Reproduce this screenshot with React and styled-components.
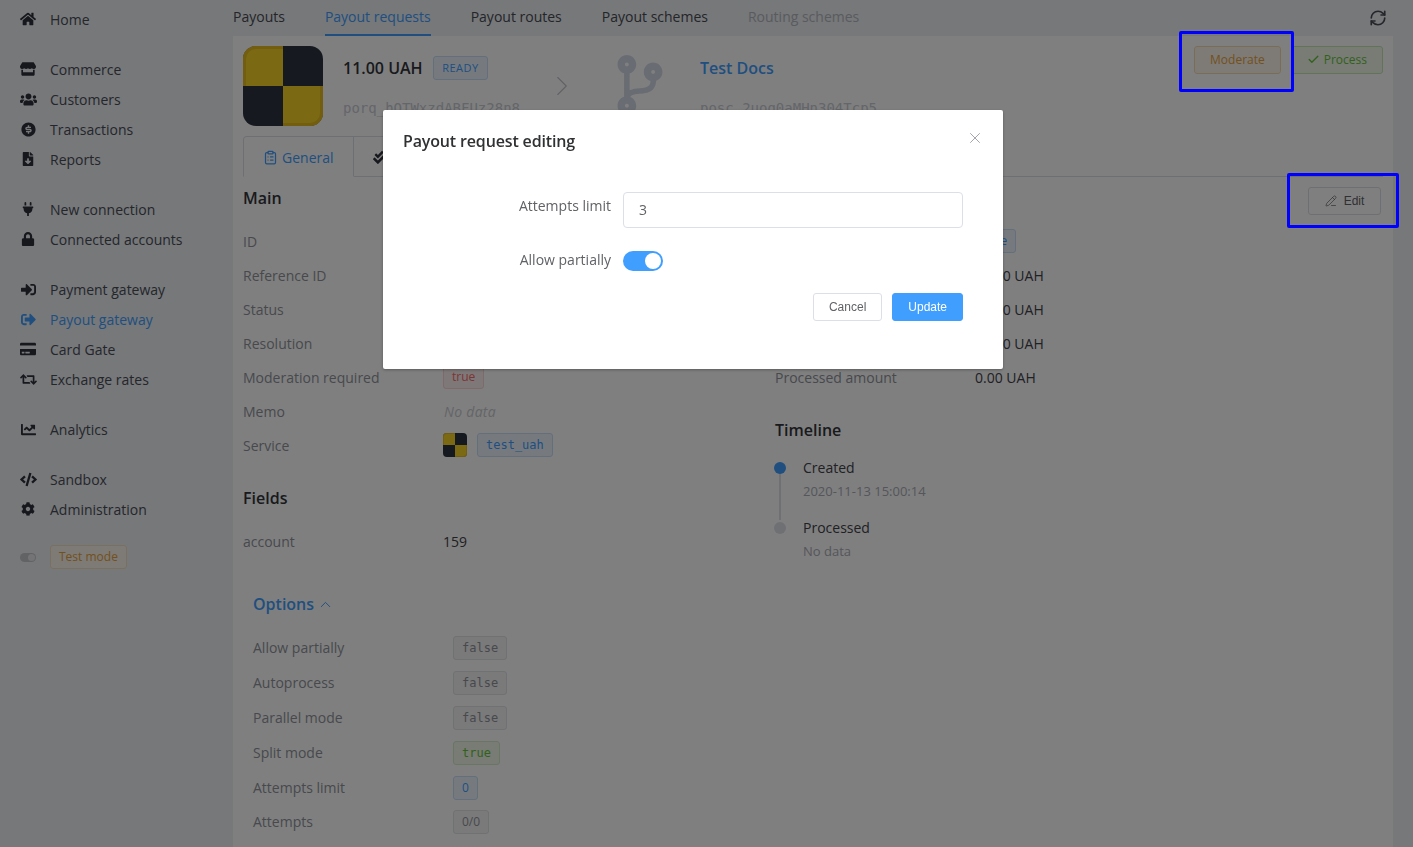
import styled, { createGlobalStyle } from "styled-components";
import {
  FaHome, FaStore, FaUsers, FaFileDownload, FaPlug, FaLock, FaSignInAlt, FaSignOutAlt,
  FaCreditCard, FaRetweet, FaChartLine, FaCode, FaCog, FaCodeBranch, FaCheckDouble,
} from "react-icons/fa";
import { RiMoneyDollarCircleFill } from "react-icons/ri";
import { Check, ChevronRight, ChevronUp, ClipboardList, PencilLine, RefreshCw, X } from "lucide-react";

const BLUE = "#409eff";
const DARK = "#4a4d55";
const LABEL = "#8f939b";

const GlobalStyle = createGlobalStyle`
  html, body { margin: 0; height: 100%; overflow: hidden; }
  body { font-family: "Open Sans", sans-serif; font-size: 14px; color: ${DARK}; background: #edf0f5; }
  * { box-sizing: border-box; }
`;

const Page = styled.div`
  display: flex;
  height: 100vh;
  overflow: hidden;
`;

const Sidebar = styled.nav`
  width: 233px;
  flex-shrink: 0;
  padding-top: 4px;
`;

const NavGroup = styled.div`
  margin-bottom: 20px;
`;

const NavItem = styled.div`
  display: flex;
  align-items: center;
  height: 30px;
  padding-left: 18px;
  color: ${(p) => (p.$active ? BLUE : DARK)};
`;

const NavIcon = styled.span`
  width: 20px;
  margin-right: 12px;
  display: flex;
  justify-content: center;
  color: ${(p) => (p.$active ? BLUE : "#2e313a")};
`;

const TestRow = styled.div`
  display: flex;
  align-items: center;
  padding-left: 20px;
  margin-top: 21px;
`;

const MiniToggle = styled.span`
  width: 16px;
  height: 9px;
  border-radius: 5px;
  background: #c4c6cb;
  margin-right: 14px;
  display: flex;
  justify-content: flex-end;
  align-items: center;
  padding-right: 1px;

  &::after {
    content: "";
    width: 7px;
    height: 7px;
    border-radius: 50%;
    background: #e8e9ec;
  }
`;

const TestTag = styled.span`
  height: 24px;
  line-height: 22px;
  padding: 0 8px;
  font-size: 12px;
  color: #e6a23c;
  background: #fdf6ec;
  border: 1px solid #f3e0c0;
  border-radius: 3px;
`;

const Main = styled.div`
  flex: 1;
  min-width: 0;
  display: flex;
  flex-direction: column;
`;

const TopBar = styled.div`
  height: 36px;
  flex-shrink: 0;
  display: flex;
  align-items: stretch;
  gap: 40px;
  padding-right: 26px;
`;

const TopTab = styled.div`
  line-height: 34px;
  height: 36px;
  color: ${(p) => (p.$active ? BLUE : p.$disabled ? "#b4b7bd" : "#494b52")};
  border-bottom: 2px solid ${(p) => (p.$active ? BLUE : "transparent")};
`;

const RefreshButton = styled.span`
  margin-left: auto;
  display: flex;
  align-items: center;
  color: #4a4d55;
`;

const Panel = styled.main`
  flex: 1;
  width: 1160px;
  background: #fff;
  padding: 10px;
  overflow: hidden;
`;

const Header = styled.header`
  display: flex;
  margin-bottom: 10px;
`;

const Info = styled.div`
  width: ${(p) => p.$width}px;
  margin-left: ${(p) => p.$left}px;
  flex-shrink: 0;
  padding-top: 10px;
`;

const TitleLine = styled.div`
  display: flex;
  align-items: center;
  gap: 10px;
  height: 24px;
  font-size: 16px;
  font-weight: 600;
  color: ${(p) => (p.$link ? BLUE : "#33353b")};
`;

const MonoLine = styled.div`
  margin-top: 16px;
  line-height: 24px;
  font-family: "DejaVu Sans Mono", monospace;
  font-size: 14px;
  color: #c8ccd3;
  white-space: nowrap;
`;

const ReadyTag = styled.span`
  height: 24px;
  line-height: 22px;
  padding: 0 8.5px;
  font-size: 11px;
  font-weight: 400;
  letter-spacing: 0.5px;
  color: ${BLUE};
  background: #ecf5ff;
  border: 1px solid #c6dff7;
  border-radius: 3px;
`;

const Arrow = styled.span`
  align-self: center;
  display: flex;
  color: #c0c4cc;
  margin-right: 42px;
`;

const BranchIcon = styled.span`
  display: flex;
  height: 60px;
  margin-top: 9px;
  color: #d3dbe6;
`;

const Actions = styled.div`
  margin-left: auto;
  display: flex;
  gap: 10px;
`;

const ActionButton = styled.span`
  height: 28px;
  display: flex;
  align-items: center;
  gap: 4px;
  padding: 0 15px 2px;
  font-size: 12px;
  color: ${(p) => (p.$kind === "warning" ? "#e6a23c" : "#67c23a")};
  background: ${(p) => (p.$kind === "warning" ? "#fdf6ec" : "#f0f9eb")};
  border: 1px solid ${(p) => (p.$kind === "warning" ? "#f5dab1" : "#c2e7b0")};
  border-radius: 3px;
`;

const Tabs = styled.div`
  display: flex;
  height: 41px;
  border-bottom: 1px solid #dcdfe6;
`;

const Tab = styled.div`
  height: 41px;
  display: flex;
  align-items: center;
  gap: 4px;
  padding: 2px 19px 0;
  color: ${(p) => (p.$active ? BLUE : DARK)};
  border: 1px solid #dcdfe6;
  border-left-width: ${(p) => (p.$active ? 1 : 0)}px;
  border-bottom-color: ${(p) => (p.$active ? "#fff" : "#dcdfe6")};
  border-top-left-radius: ${(p) => (p.$active ? 4 : 0)}px;
  min-width: ${(p) => (p.$active ? 111 : 120)}px;
`;

const Columns = styled.div`
  display: grid;
  grid-template-columns: 532px 608px;
  padding-top: 10px;
`;

const SectionHead = styled.div`
  display: flex;
  justify-content: space-between;
  align-items: flex-start;
  height: 37px;
`;

const Heading = styled.h3`
  margin: ${(p) => p.$top || 0}px 0 0;
  line-height: 22px;
  font-size: 16px;
  font-weight: 600;
  color: #33353b;
`;

const EditButton = styled.span`
  width: 73px;
  height: 28px;
  margin-right: 2px;
  padding-bottom: 1px;
  display: flex;
  align-items: center;
  justify-content: center;
  gap: 7px;
  font-family: "Liberation Sans", sans-serif;
  font-size: 12px;
  color: #606266;
  background: #fff;
  border: 1px solid #dcdfe6;
  border-radius: 3px;
`;

const Row = styled.div`
  display: grid;
  grid-template-columns: 200px 1fr;
  align-items: center;
  height: ${(p) => p.$height || 34}px;
  margin-top: ${(p) => p.$top || 0}px;
  color: ${LABEL};
`;

const Value = styled.span`
  display: flex;
  align-items: center;
  gap: 10px;
  color: #3f4249;
`;

const Empty = styled.i`
  margin-left: 1px;
  letter-spacing: 0.3px;
  color: #c8cace;
`;

const TONES = {
  gray: ["#909399", "#f4f4f5", "#e1e2e6"],
  green: ["#67c23a", "#f0f9eb", "#d5edc8"],
  blue: [BLUE, "#ecf5ff", "#c6dff7"],
  red: ["#f56c6c", "#fef0f0", "#fbd5d5"],
};

const MonoTag = styled.span`
  height: 24px;
  line-height: 22px;
  padding: 0 8px;
  font-family: ${(p) => (p.$plain ? `"Open Sans", sans-serif` : `"DejaVu Sans Mono", monospace`)};
  font-size: 12px;
  color: ${(p) => TONES[p.$tone][0]};
  background: ${(p) => TONES[p.$tone][1]};
  border: 1px solid ${(p) => TONES[p.$tone][2]};
  border-radius: 3px;
`;

const Options = styled.section`
  padding-left: 10px;
  margin-top: 35px;
`;

const OptionsTitle = styled.div`
  display: flex;
  align-items: center;
  gap: 3px;
  height: 22px;
  margin-bottom: 15px;
  font-size: 16px;
  font-weight: 600;
  color: ${BLUE};
`;

const TimelineList = styled.div`
  margin-top: 16px;
`;

const TimelineItem = styled.div`
  position: relative;
  height: 60px;
  padding-left: 28px;
  line-height: 22px;
  color: #3f4249;

  &::before {
    content: "";
    position: absolute;
    left: -1px;
    top: 5px;
    width: 12px;
    height: 12px;
    border-radius: 50%;
    background: ${(p) => (p.$done ? BLUE : "#dfe1e6")};
  }

  &::after {
    content: "";
    display: ${(p) => (p.$done ? "block" : "none")};
    position: absolute;
    left: 4px;
    top: 17px;
    width: 2px;
    height: 46px;
    background: #dfe1e6;
  }
`;

const TimelineDate = styled.div`
  margin-top: 1px;
  font-size: 13px;
  color: #a9adb5;
`;

const Overlay = styled.div`
  position: fixed;
  inset: 0;
  background: rgba(0, 0, 0, 0.5);
  display: flex;
  justify-content: center;
  align-items: flex-start;
  padding: 110px 27px 0 0;
`;

const Modal = styled.div`
  position: relative;
  width: 620px;
  height: 259px;
  background: #fff;
  border-radius: 2px;
  box-shadow: 0 1px 3px rgba(0, 0, 0, 0.3);
  padding: 19px 40px 0 20px;
`;

const ModalTitle = styled.div`
  line-height: 24px;
  font-size: 16px;
  font-weight: 600;
  letter-spacing: -0.15px;
  color: #303133;
  margin: 0 0 39px 0;
`;

const CloseButton = styled.span`
  position: absolute;
  top: 19px;
  right: 19px;
  display: flex;
  color: #909399;
`;

const FormRow = styled.div`
  display: flex;
  margin-bottom: ${(p) => p.$gap}px;
`;

const FormLabel = styled.label`
  width: 220px;
  padding-right: 12px;
  text-align: right;
  line-height: ${(p) => p.$line}px;
  color: #606266;
`;

const Field = styled.div`
  flex: 1;
  height: 36px;
  line-height: 34px;
  padding: 0 15px;
  color: #606266;
  background: #fff;
  border: 1px solid #dcdfe6;
  border-radius: 4px;
`;

const Switch = styled.span`
  width: 40px;
  height: 20px;
  margin-top: 4px;
  padding: 2px;
  display: flex;
  justify-content: flex-end;
  border-radius: 10px;
  background: #409eff;

  &::after {
    content: "";
    width: 16px;
    height: 16px;
    border-radius: 50%;
    background: #fff;
  }
`;

const ModalActions = styled.div`
  display: flex;
  justify-content: flex-end;
  gap: 10px;
`;

const ModalButton = styled.span`
  height: 28px;
  line-height: 26px;
  padding: 0 15px;
  font-family: "Liberation Sans", sans-serif;
  font-size: 12px;
  color: ${(p) => (p.$primary ? "#fff" : "#606266")};
  background: ${(p) => (p.$primary ? "#409eff" : "#fff")};
  border: 1px solid ${(p) => (p.$primary ? "#409eff" : "#dcdfe6")};
  border-radius: 3px;
`;

// annotation frames drawn on top of the screenshot
const Marker = styled.div`
  position: fixed;
  left: ${(p) => p.$x}px;
  top: ${(p) => p.$y}px;
  width: ${(p) => p.$w}px;
  height: ${(p) => p.$h}px;
  border: 3px solid #0000ff;
  border-radius: 2px;
`;

const Logo = ({ size }) => (
  <svg width={size} height={size} viewBox="0 0 80 80" style={{ flexShrink: 0 }}>
    <defs>
      <clipPath id={`logo-${size}`}>
        <rect width="80" height="80" rx="13" />
      </clipPath>
    </defs>
    <g clipPath={`url(#logo-${size})`}>
      <rect width="80" height="80" fill="#2f3340" />
      <rect width="40" height="40" fill="#f7d329" />
      <rect x="40" y="40" width="40" height="40" fill="#f7d329" />
      <path d="M0 40V13A13 13 0 0 1 13 0H40V3H13A10 10 0 0 0 3 13V40ZM80 40V67A13 13 0 0 1 67 80H40V77H67A10 10 0 0 0 77 67V40Z" fill="#e4bc1c" />
    </g>
  </svg>
);

const NAV = [
  [{ icon: <FaHome size={16} />, label: "Home" }],
  [
    { icon: <FaStore size={16} />, label: "Commerce" },
    { icon: <FaUsers size={17} />, label: "Customers" },
    { icon: <RiMoneyDollarCircleFill size={17} />, label: "Transactions" },
    { icon: <FaFileDownload size={14} />, label: "Reports" },
  ],
  [
    { icon: <FaPlug size={14} />, label: "New connection" },
    { icon: <FaLock size={14} />, label: "Connected accounts" },
  ],
  [
    { icon: <FaSignInAlt size={15} />, label: "Payment gateway" },
    { icon: <FaSignOutAlt size={15} />, label: "Payout gateway", active: true },
    { icon: <FaCreditCard size={16} />, label: "Card Gate" },
    { icon: <FaRetweet size={17} />, label: "Exchange rates" },
  ],
  [{ icon: <FaChartLine size={15} />, label: "Analytics" }],
  [
    { icon: <FaCode size={17} />, label: "Sandbox" },
    { icon: <FaCog size={14} />, label: "Administration" },
  ],
];

const TOP_TABS = ["Payouts", "Payout requests", "Payout routes", "Payout schemes", "Routing schemes"];

const OPTIONS = [
  ["Allow partially", "false", "gray", 35],
  ["Autoprocess", "false", "gray", 35],
  ["Parallel mode", "false", "gray", 35],
  ["Split mode", "true", "green", 35],
  ["Attempts limit", "0", "blue", 35, true],
  ["Attempts", "0/0", "gray", 33, true],
];

export default function App() {
  return (
    <>
      <GlobalStyle />
      <Page>
        <Sidebar>
          {NAV.map((group, i) => (
            <NavGroup key={i}>
              {group.map((item) => (
                <NavItem key={item.label} $active={item.active}>
                  <NavIcon $active={item.active}>{item.icon}</NavIcon>
                  {item.label}
                </NavItem>
              ))}
            </NavGroup>
          ))}
          <TestRow>
            <MiniToggle />
            <TestTag>Test mode</TestTag>
          </TestRow>
        </Sidebar>

        <Main>
          <TopBar>
            {TOP_TABS.map((t, i) => (
              <TopTab key={t} $active={i === 1} $disabled={i === 4}>{t}</TopTab>
            ))}
            <RefreshButton><RefreshCw size={18} strokeWidth={2.2} /></RefreshButton>
          </TopBar>

          <Panel>
            <Header>
              <Logo size={80} />
              <Info $left={20} $width={213}>
                <TitleLine>
                  11.00 UAH
                  <ReadyTag>READY</ReadyTag>
                </TitleLine>
                <MonoLine>porq_hOTWxzdABFUz28n8</MonoLine>
              </Info>
              <Arrow><ChevronRight size={34} strokeWidth={0.8} style={{ margin: "0 -11px" }} /></Arrow>
              <BranchIcon><FaCodeBranch size={60} /></BranchIcon>
              <Info $left={30} $width={300}>
                <TitleLine $link>Test Docs</TitleLine>
                <MonoLine>posc_2uog0aMHn304Tcp5</MonoLine>
              </Info>
              <Actions>
                <ActionButton $kind="warning">Moderate</ActionButton>
                <ActionButton $kind="success"><Check size={13} strokeWidth={2.5} />Process</ActionButton>
              </Actions>
            </Header>

            <Tabs>
              <Tab $active><ClipboardList size={15} />General</Tab>
              <Tab><FaCheckDouble size={13} color="#2e313a" /></Tab>
            </Tabs>

            <Columns>
              <div>
                <SectionHead><Heading>Main</Heading></SectionHead>
                <Row>ID</Row>
                <Row>Reference ID</Row>
                <Row>Status</Row>
                <Row>Resolution</Row>
                <Row>
                  Moderation required
                  <Value><MonoTag $tone="red" $plain>true</MonoTag></Value>
                </Row>
                <Row>
                  Memo
                  <Value><Empty>No data</Empty></Value>
                </Row>
                <Row>
                  Service
                  <Value><Logo size={24} /><MonoTag $tone="blue">test_uah</MonoTag></Value>
                </Row>

                <Heading $top={25}>Fields</Heading>
                <Row $top={15}>
                  account
                  <Value>159</Value>
                </Row>

                <Options>
                  <OptionsTitle>Options <ChevronUp size={17} strokeWidth={1.4} /></OptionsTitle>
                  {OPTIONS.map(([label, value, tone, height, plain]) => (
                    <Row key={label} $height={height}>
                      {label}
                      <Value><MonoTag $tone={tone} $plain={plain}>{value}</MonoTag></Value>
                    </Row>
                  ))}
                </Options>
              </div>

              <div>
                <SectionHead>
                  <span />
                  <EditButton><PencilLine size={12} strokeWidth={1.4} />Edit</EditButton>
                </SectionHead>
                <Row><span /><Value><MonoTag $tone="blue" $plain>true</MonoTag></Value></Row>
                <Row><span /><Value>11.00 UAH</Value></Row>
                <Row><span /><Value>11.00 UAH</Value></Row>
                <Row><span /><Value>11.00 UAH</Value></Row>
                <Row>
                  Processed amount
                  <Value>0.00 UAH</Value>
                </Row>

                <Heading $top={25}>Timeline</Heading>
                <TimelineList>
                  <TimelineItem $done>
                    Created
                    <TimelineDate>2020-11-13 15:00:14</TimelineDate>
                  </TimelineItem>
                  <TimelineItem>
                    Processed
                    <TimelineDate>No data</TimelineDate>
                  </TimelineItem>
                </TimelineList>
              </div>
            </Columns>
          </Panel>
        </Main>
      </Page>

      <Overlay>
        <Modal>
          <ModalTitle>Payout request editing</ModalTitle>
          <CloseButton><X size={18} strokeWidth={1.1} /></CloseButton>
          <FormRow $gap={19}>
            <FormLabel $line={28}>Attempts limit</FormLabel>
            <Field>3</Field>
          </FormRow>
          <FormRow $gap={20}>
            <FormLabel $line={26}>Allow partially</FormLabel>
            <Switch />
          </FormRow>
          <ModalActions>
            <ModalButton>Cancel</ModalButton>
            <ModalButton $primary>Update</ModalButton>
          </ModalActions>
        </Modal>
      </Overlay>

      <Marker $x={1179} $y={31} $w={115} $h={61} />
      <Marker $x={1287} $y={173} $w={112} $h={55} />
    </>
  );
}
